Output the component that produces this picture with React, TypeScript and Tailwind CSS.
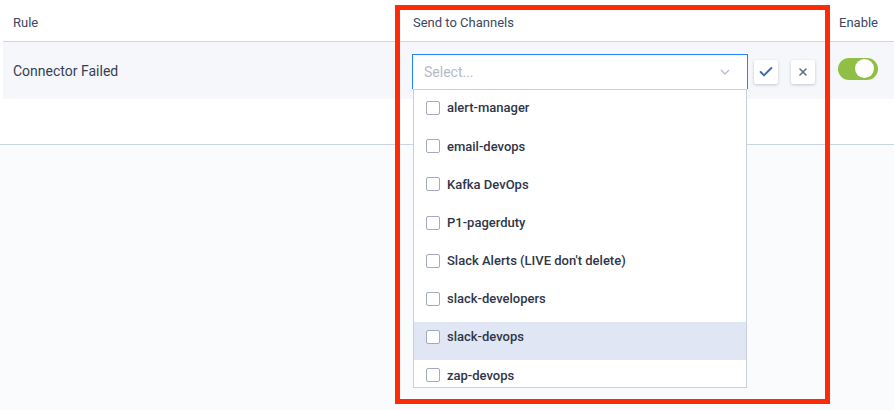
import { Check, X } from "lucide-react";

const channels = [
  "alert-manager",
  "email-devops",
  "Kafka DevOps",
  "P1-pagerduty",
  "Slack Alerts (LIVE don't delete)",
  "slack-developers",
  "slack-devops",
  "zap-devops",
];

function ChannelOption({ label, active }: { label: string; active?: boolean }) {
  return (
    <div
      className={`flex h-[38.2px] shrink-0 items-center gap-[7px] pb-2 pl-3 ${
        active ? "bg-[#e0e6f3]" : "bg-white"
      }`}
    >
      <span className="h-[14px] w-[14px] shrink-0 rounded-[2px] border border-[#a3abbd] bg-white" />
      <span className="text-[13px] font-medium text-[#2f3648]">{label}</span>
    </div>
  );
}

function ChannelSelect() {
  return (
    <div className="relative w-[336px]">
      <div className="flex h-[35px] items-center justify-between border border-b-0 border-[#2684ff] bg-white pl-[11px] pr-[17px]">
        <span className="text-[14px] text-[#b4bbc8]">Select...</span>
        <svg width="10" height="6" viewBox="0 0 10 6" fill="none">
          <path d="M1 1l4 4 4-4" stroke="#b6bdcc" strokeWidth="1.3" />
        </svg>
      </div>
      {/* open menu */}
      <div className="absolute left-[1px] right-[1px] top-[35px] z-10 flex h-[299px] flex-col overflow-hidden border border-[#c9d0dd] bg-white pt-[3px]">
        {channels.map((c) => (
          <ChannelOption key={c} label={c} active={c === "slack-devops"} />
        ))}
      </div>
    </div>
  );
}

function IconButton({ children }: { children: React.ReactNode }) {
  return (
    <button
      type="button"
      className="flex h-6 w-6 items-center justify-center rounded-[2px] bg-white shadow-[0_1px_3px_rgba(40,50,80,0.25)]"
    >
      {children}
    </button>
  );
}

export default function App() {
  return (
    <div
      className="relative h-[410px] w-[894px] overflow-hidden bg-[#fafbfd]"
      style={{ fontFamily: "Roboto, 'Liberation Sans', sans-serif" }}
    >
      <div className="h-[145px] border-b border-[#cdd4e3] bg-white">
        <div className="ml-[3px] grid h-[42px] grid-cols-[398px_429px_1fr] items-center border-b border-[#cdd4e3] pt-[5px] text-[13px] text-[#3d4760]">
          <div className="pl-[10px]">Rule</div>
          <div className="pl-3">Send to Channels</div>
          <div className="pl-[9px]">Enable</div>
        </div>
        <div className="ml-[3px] grid h-[57px] grid-cols-[398px_429px_1fr] items-center bg-[#f5f7fb] pt-[2px]">
          <div className="pl-[10px] text-[14px] text-[#383f52]">Connector Failed</div>
          <div className="flex items-center pl-[11px]">
            <ChannelSelect />
            <div className="ml-[6px]">
              <IconButton>
                <Check size={16} strokeWidth={3} className="text-[#3b6db3]" />
              </IconButton>
            </div>
            <div className="ml-[13px]">
              <IconButton>
                <X size={12} strokeWidth={3} className="text-[#5e6a86]" />
              </IconButton>
            </div>
          </div>
          <div className="pl-2">
            <div className="mb-[6px] flex h-[22px] w-10 items-center justify-end rounded-full bg-[#8fc045] pr-1">
              <span className="h-[19px] w-[19px] rounded-full bg-white" />
            </div>
          </div>
        </div>
      </div>

      {/* annotation frame */}
      <div className="pointer-events-none absolute left-[395px] top-[5px] z-20 h-[399px] w-[435px] border-[5px] border-[#fe2a08]" />
    </div>
  );
}
